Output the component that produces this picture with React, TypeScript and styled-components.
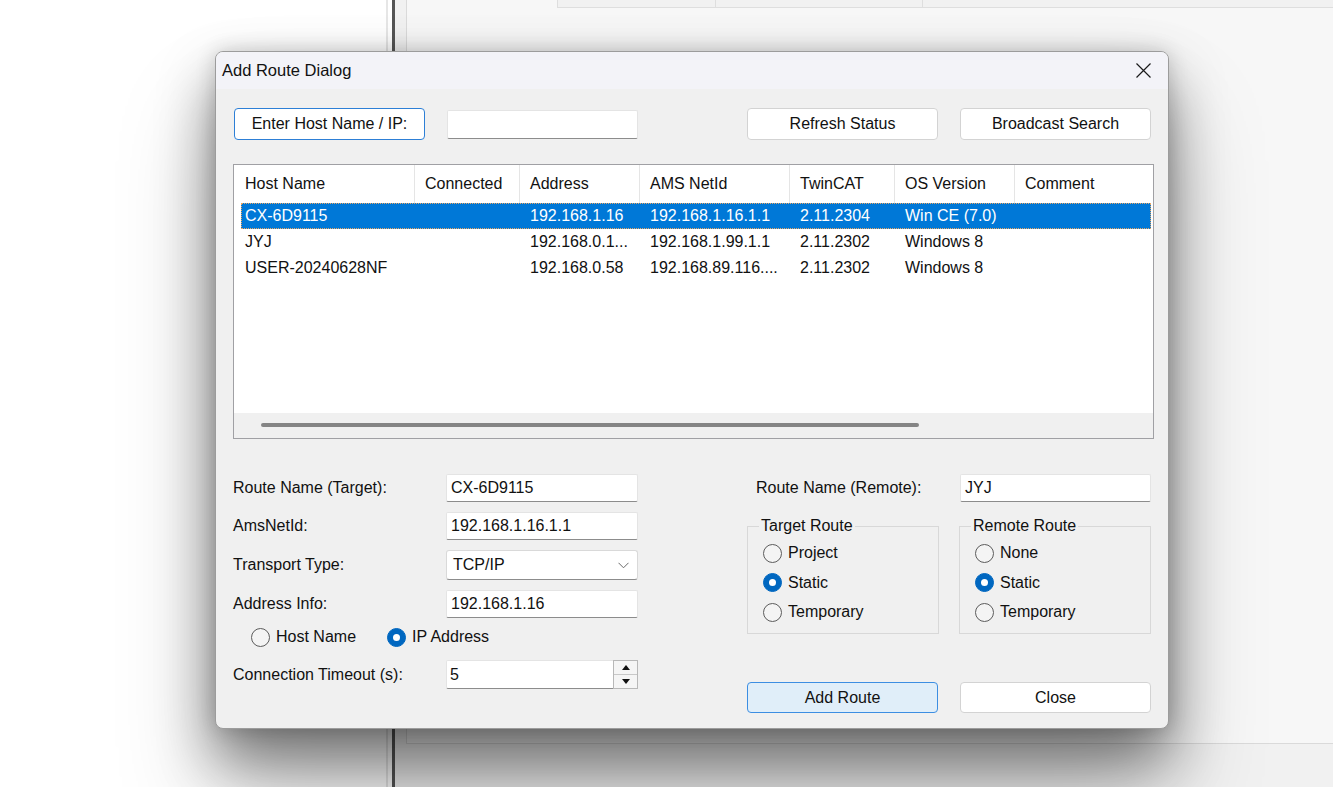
import React from "react";
import styled, { createGlobalStyle, css } from "styled-components";

const GlobalStyle = createGlobalStyle`
  html, body { margin: 0; padding: 0; }
  body {
    font-family: "Liberation Sans", Arial, sans-serif;
    background: #ffffff;
    color: #111;
  }
  * { box-sizing: border-box; }
`;

/* ---------- backdrop (windows behind the dialog) ---------- */

const Desktop = styled.div`
  position: relative;
  width: 1333px;
  height: 787px;
  overflow: hidden;
  display: flex;
  background: #ffffff;
`;

const LeftPane = styled.div`
  width: 386px;
  background: #ffffff;
`;

const Splitter = styled.div`
  width: 9px;
  background: #ffffff;
  border-left: 2px solid #e6e6e6;
  border-right: 3px solid #555555;
`;

const MainPane = styled.div`
  flex: 1;
  display: flex;
  flex-direction: column;
  background: #f1f1f1;
`;

const Panel = styled.div`
  height: 744px;
  margin-left: 11px;
  background: #f7f7f7;
  border-left: 1px solid #dadada;
  border-bottom: 1px solid #dadada;
  display: flex;
  flex-direction: column;
`;

const TopStrip = styled.div`
  height: 8px;
  margin-left: 150px;
  display: flex;
  background: #f1f1f1;
  border-left: 1px solid #dedede;
  border-bottom: 1px solid #dedede;
`;

const StripCell = styled.div<{ $w: number }>`
  width: ${(p) => p.$w}px;
  border-right: 1px solid #dedede;
`;

/* ---------- dialog ---------- */

const Dialog = styled.div`
  position: absolute;
  left: 215px;
  top: 51px;
  width: 954px;
  height: 678px;
  display: flex;
  flex-direction: column;
  background: #f0f0f0;
  border: 1px solid #9c9c9c;
  border-radius: 8px;
  overflow: hidden;
  box-shadow: 0 28px 56px rgba(0, 0, 0, 0.42), 0 64px 96px rgba(0, 0, 0, 0.26),
    0 0 20px rgba(0, 0, 0, 0.16);
`;

const TitleBar = styled.div`
  height: 37px;
  flex: none;
  display: flex;
  align-items: center;
  justify-content: space-between;
  padding: 0 17px 0 6px;
  background: #f3f3f8;
`;

const TitleText = styled.div`
  font-size: 16.5px;
  color: #111;
`;

const CloseGlyph = styled.svg`
  width: 15px;
  height: 15px;
  display: block;
`;

const Body = styled.div`
  flex: 1;
  display: flex;
  flex-direction: column;
  padding: 19px 14px 0 17px;
  font-size: 16px;
`;

const TopRow = styled.div`
  height: 32px;
  display: flex;
  align-items: center;
  padding-right: 3px;
`;

const Spacer = styled.div`
  flex: 1;
`;

const Button = styled.button<{ $variant?: "focus" | "default" | "plain"; $ml?: number }>`
  width: 191px;
  height: 32px;
  margin: 0 0 0 ${(p) => p.$ml ?? 0}px;
  padding: 0;
  font-family: "Liberation Sans", Arial, sans-serif;
  font-size: 16px;
  color: #111;
  background: #ffffff;
  border: 1px solid #d3d3d3;
  border-radius: 4px;
  ${(p) =>
    p.$variant === "focus" &&
    css`
      border: 1.5px solid #2d7fd6;
    `}
  ${(p) =>
    p.$variant === "default" &&
    css`
      background: #e0eef9;
      border: 1.5px solid #3c8ee2;
    `}
`;

const TextBox = styled.div<{ $w?: number; $h?: number; $ml?: number }>`
  width: ${(p) => p.$w ?? 192}px;
  height: ${(p) => p.$h ?? 28}px;
  margin-left: ${(p) => p.$ml ?? 0}px;
  display: flex;
  align-items: center;
  padding-left: 4px;
  background: #ffffff;
  border: 1px solid #e4e4e4;
  border-bottom: 1px solid #8c8c8c;
  border-radius: 2px;
  font-size: 16px;
  color: #111;
`;

/* ---------- list view ---------- */

const ListView = styled.div`
  margin-top: 24px;
  height: 275px;
  border: 1px solid #a0a0a4;
  background: #ffffff;
  display: flex;
  flex-direction: column;
  overflow: hidden;
`;

const HeaderRow = styled.div`
  height: 38px;
  flex: none;
  display: flex;
  background: #ffffff;
`;

const HeaderCell = styled.div<{ $w: number; $pl: number }>`
  width: ${(p) => p.$w}px;
  flex: none;
  display: flex;
  align-items: center;
  padding-left: ${(p) => p.$pl}px;
  border-right: 1px solid #e5e5e5;
  font-size: 16px;
  color: #111;
  white-space: nowrap;
`;

const Rows = styled.div`
  flex: 1;
  display: flex;
  flex-direction: column;
`;

const Row = styled.div<{ $selected?: boolean }>`
  height: 26px;
  width: 910px;
  margin-left: 7px;
  display: flex;
  align-items: center;
  color: #111;
  ${(p) =>
    p.$selected &&
    css`
      background: #0078d7;
      color: #ffffff;
      outline: 1px dotted #e9a765;
      outline-offset: -1px;
    `}
`;

const Cell = styled.div<{ $w: number; $pl: number }>`
  width: ${(p) => p.$w}px;
  flex: none;
  padding-left: ${(p) => p.$pl}px;
  font-size: 16px;
  white-space: nowrap;
  overflow: hidden;
`;

const HScroll = styled.div`
  height: 25px;
  flex: none;
  background: #f0f0f0;
  display: flex;
  align-items: center;
  padding-left: 27px;
`;

const HThumb = styled.div`
  width: 658px;
  height: 4px;
  border-radius: 2px;
  background: #858585;
  margin-top: -1px;
`;

/* ---------- form area ---------- */

const BottomGrid = styled.div`
  margin-top: 35px;
  display: grid;
  grid-template-columns: 405px 405px;
  column-gap: 109px;
  align-items: start;
`;

const FormColumn = styled.div`
  display: flex;
  flex-direction: column;
  gap: 10px;
`;

const FieldRow = styled.div<{ $labelPad?: number }>`
  display: grid;
  grid-template-columns: 213px 192px;
  align-items: center;
  & > span {
    padding-left: ${(p) => p.$labelPad ?? 0}px;
    white-space: nowrap;
  }
`;

const FieldLabel = styled.span`
  font-size: 16px;
  color: #111;
`;

const SelectBox = styled.div`
  height: 30px;
  display: flex;
  align-items: center;
  justify-content: space-between;
  padding: 0 8px 0 6px;
  background: #ffffff;
  border: 1px solid #d9d9d9;
  border-bottom: 1px solid #8c8c8c;
  border-radius: 3px;
  font-size: 16px;
`;

const Chevron = styled.svg`
  width: 11px;
  height: 7px;
  display: block;
`;

const RadioRow = styled.div`
  height: 22px;
  margin: -2px 0 2px;
  display: flex;
  align-items: center;
  gap: 31px;
  padding-left: 18px;
`;

const RadioOption = styled.label`
  display: flex;
  align-items: center;
  gap: 6px;
  height: 22px;
  font-size: 16px;
  color: #111;
  white-space: nowrap;
`;

const RadioDot = styled.span<{ $checked?: boolean }>`
  width: 19px;
  height: 19px;
  flex: none;
  border-radius: 50%;
  border: 1px solid #5c5c5c;
  background: #f4f4f4;
  position: relative;
  ${(p) =>
    p.$checked &&
    css`
      border-color: #0067c0;
      background: #0067c0;
      &::after {
        content: "";
        position: absolute;
        left: 5px;
        top: 5px;
        width: 7px;
        height: 7px;
        border-radius: 50%;
        background: #ffffff;
      }
    `}
`;

const SpinBox = styled.div`
  height: 29px;
  display: flex;
  background: #ffffff;
  border: 1px solid #e4e4e4;
  border-bottom: 1px solid #8c8c8c;
  border-radius: 2px;
`;

const SpinValue = styled.div`
  flex: 1;
  display: flex;
  align-items: center;
  padding-left: 3px;
  font-size: 16px;
`;

const SpinButtons = styled.div`
  width: 25px;
  display: flex;
  flex-direction: column;
  border: 1px solid #b8b8b8;
  margin: -1px -1px -1px 0;
  background: #f5f5f5;
`;

const SpinButton = styled.div<{ $down?: boolean }>`
  flex: 1;
  display: flex;
  align-items: center;
  justify-content: center;
  ${(p) => !p.$down && css`border-bottom: 1px solid #c8c8c8;`}
  &::before {
    content: "";
    width: 0;
    height: 0;
    border-left: 4px solid transparent;
    border-right: 4px solid transparent;
    ${(p) =>
      p.$down
        ? css`border-top: 5px solid #111;`
        : css`border-bottom: 5px solid #111;`}
  }
`;

const RightColumn = styled.div`
  display: flex;
  flex-direction: column;
`;

const GroupsRow = styled.div`
  margin-top: 15px;
  display: grid;
  grid-template-columns: 192px 192px;
  column-gap: 20px;
`;

const GroupBox = styled.fieldset`
  margin: 0;
  height: 117px;
  padding: 7px 0 0 15px;
  border: 1px solid #d8d8d8;
  border-radius: 0;
  display: flex;
  flex-direction: column;
  gap: 7.5px;
  min-width: 0;
`;

const GroupLegend = styled.legend`
  padding: 0 2px;
  margin-left: -4px;
  font-size: 16px;
  line-height: 18px;
  color: #111;
`;

const ActionRow = styled.div`
  margin-top: 48px;
  display: grid;
  grid-template-columns: 191px 191px;
  column-gap: 22px;
  & > button {
    height: 31px;
  }
`;

/* ---------- data ---------- */

const columns = [
  { title: "Host Name", w: 181 },
  { title: "Connected", w: 105 },
  { title: "Address", w: 120 },
  { title: "AMS NetId", w: 150 },
  { title: "TwinCAT", w: 105 },
  { title: "OS Version", w: 120 },
  { title: "Comment", w: 200 },
];

const rows = [
  ["CX-6D9115", "", "192.168.1.16", "192.168.1.16.1.1", "2.11.2304", "Win CE (7.0)", ""],
  ["JYJ", "", "192.168.0.1...", "192.168.1.99.1.1", "2.11.2302", "Windows 8", ""],
  ["USER-20240628NF", "", "192.168.0.58", "192.168.89.116....", "2.11.2302", "Windows 8", ""],
];

const Radio = ({ label, checked }: { label: string; checked?: boolean }) => (
  <RadioOption>
    <RadioDot $checked={checked} />
    {label}
  </RadioOption>
);

export default function App() {
  return (
    <>
      <GlobalStyle />
      <Desktop>
        <LeftPane />
        <Splitter />
        <MainPane>
          <Panel>
            <TopStrip>
              <StripCell $w={158} />
              <StripCell $w={207} />
            </TopStrip>
          </Panel>
        </MainPane>

        <Dialog>
          <TitleBar>
            <TitleText>Add Route Dialog</TitleText>
            <CloseGlyph viewBox="0 0 15 15">
              <path d="M0.5 0.5 L14.5 14.5 M14.5 0.5 L0.5 14.5" stroke="#1b1b1b" strokeWidth="1.2" fill="none" />
            </CloseGlyph>
          </TitleBar>

          <Body>
            <TopRow>
              <Button $variant="focus" $ml={1}>Enter Host Name / IP:</Button>
              <TextBox $w={191} $h={29} $ml={22} />
              <Spacer />
              <Button>Refresh Status</Button>
              <Button $ml={22}>Broadcast Search</Button>
            </TopRow>

            <ListView>
              <HeaderRow>
                {columns.map((c, i) => (
                  <HeaderCell key={c.title} $w={c.w} $pl={i === 0 ? 11 : 10}>
                    {c.title}
                  </HeaderCell>
                ))}
              </HeaderRow>
              <Rows>
                {rows.map((r, ri) => (
                  <Row key={ri} $selected={ri === 0}>
                    {r.map((v, ci) => (
                      <Cell key={ci} $w={ci === 0 ? 174 : columns[ci].w} $pl={ci === 0 ? 4 : 10}>
                        {v}
                      </Cell>
                    ))}
                  </Row>
                ))}
              </Rows>
              <HScroll>
                <HThumb />
              </HScroll>
            </ListView>

            <BottomGrid>
              <FormColumn>
                <FieldRow>
                  <FieldLabel>Route Name (Target):</FieldLabel>
                  <TextBox>CX-6D9115</TextBox>
                </FieldRow>
                <FieldRow>
                  <FieldLabel>AmsNetId:</FieldLabel>
                  <TextBox>192.168.1.16.1.1</TextBox>
                </FieldRow>
                <FieldRow>
                  <FieldLabel>Transport Type:</FieldLabel>
                  <SelectBox>
                    TCP/IP
                    <Chevron viewBox="0 0 11 7">
                      <path d="M0.5 0.8 L5.5 5.8 L10.5 0.8" stroke="#6a6a6a" strokeWidth="1" fill="none" />
                    </Chevron>
                  </SelectBox>
                </FieldRow>
                <FieldRow>
                  <FieldLabel>Address Info:</FieldLabel>
                  <TextBox>192.168.1.16</TextBox>
                </FieldRow>
                <RadioRow>
                  <Radio label="Host Name" />
                  <Radio label="IP Address" checked />
                </RadioRow>
                <FieldRow>
                  <FieldLabel>Connection Timeout (s):</FieldLabel>
                  <SpinBox>
                    <SpinValue>5</SpinValue>
                    <SpinButtons>
                      <SpinButton />
                      <SpinButton $down />
                    </SpinButtons>
                  </SpinBox>
                </FieldRow>
              </FormColumn>

              <RightColumn>
                <FieldRow $labelPad={9}>
                  <FieldLabel>Route Name (Remote):</FieldLabel>
                  <TextBox $w={191}>JYJ</TextBox>
                </FieldRow>
                <GroupsRow>
                  <GroupBox>
                    <GroupLegend>Target Route</GroupLegend>
                    <Radio label="Project" />
                    <Radio label="Static" checked />
                    <Radio label="Temporary" />
                  </GroupBox>
                  <GroupBox>
                    <GroupLegend>Remote Route</GroupLegend>
                    <Radio label="None" />
                    <Radio label="Static" checked />
                    <Radio label="Temporary" />
                  </GroupBox>
                </GroupsRow>
                <ActionRow>
                  <Button $variant="default">Add Route</Button>
                  <Button>Close</Button>
                </ActionRow>
              </RightColumn>
            </BottomGrid>
          </Body>
        </Dialog>
      </Desktop>
    </>
  );
}
